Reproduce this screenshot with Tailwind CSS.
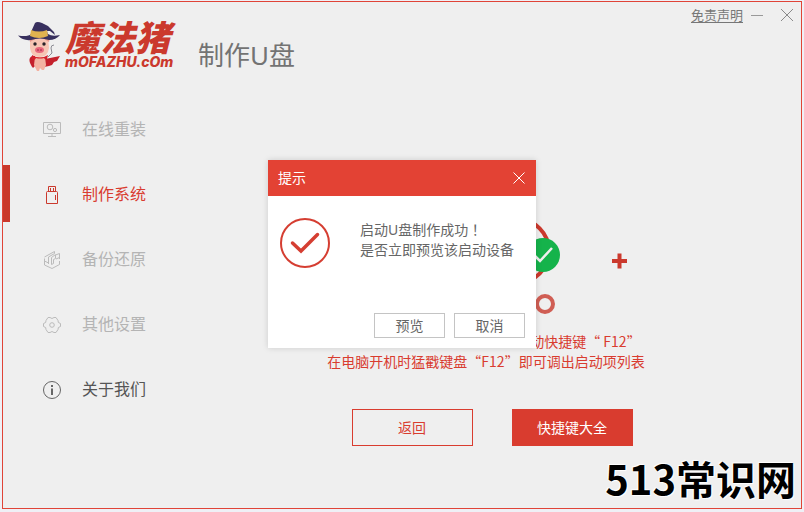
<!DOCTYPE html>
<html lang="zh-CN">
<head>
    <meta charset="UTF-8">
    <meta name="viewport" content="width=device-width, initial-scale=1.0">
    <title>魔法猪 - 制作U盘</title>
    <script src="https://cdn.jsdelivr.net/npm/@tailwindcss/browser@4"></script>
</head>
<body class="flex min-h-screen flex-col bg-[#eff0f6] px-0.5 pt-px pb-[3px] font-['Noto_Sans','Noto_Sans_CJK_SC',sans-serif] text-sm text-[#666]">
    <div class="relative flex flex-1 flex-col border border-[#e04437] bg-[#efefef]">
        <!-- Header -->
        <header class="flex items-start justify-between">
            <div class="flex items-start pt-5 pl-[15px]">
                <svg class="h-[50px] w-[42px]" viewBox="0 0 42 50" aria-hidden="true">
                    <path d="M36 23q-3 0-3 3l1 5-4 4" fill="none" stroke="#8b8b93" stroke-width="1"/>
                    <path d="M27 37l15-3-3 5-3 1-2 3-3 1-5 1z" fill="#c4202c"/>
                    <path d="M14 34c-4 2-3 7 1 12l3-3-1-9z" fill="#c4202c"/>
                    <path d="M17 35h10l1 8-2 5h-2l-2-2-1 3h-2l-3-6z" fill="#f3b2a2"/>
                    <path d="M14 33q8 5 16 0l-1 4q-2 1-3-1-4 1-8 0-1 3-4 1z" fill="#d5202b"/>
                    <path d="M12 15h18l1 11q-1 9-9.500 9T12 26z" fill="#f7c5b4"/>
                    <path d="M12 20l-1-5 6 2zM31 20l1-5-6 2z" fill="#e99b90"/>
                    <path d="M13 10L17 1q2-2 7 0l6 3 6 6 1 3-5-4-3 0 1 4H13z" fill="#38305e"/>
                    <path d="M0 13.500Q10 15 13 12q8 3 17 0 4 3 12 1-4 5-11 5-9-3-18 0-8 1-13-4.500z" fill="#38305e"/>
                    <path d="M13 8q8 3 16 0l1 6q-9 4-18 0z" fill="#e0b250"/>
                    <circle cx="17" cy="22" r="1.700" fill="#292329"/>
                    <circle cx="26" cy="22" r="1.700" fill="#292329"/>
                    <ellipse cx="21.500" cy="28" rx="4.500" ry="3" fill="#e8677c"/>
                    <path d="M20 27v2M23 27v2" stroke="#a02c45"/>
                </svg>
                <div class="w-[114px] pl-[5px] whitespace-nowrap text-[#cb392d] italic">
                    <div class="text-[35px] leading-8 font-black">魔法猪</div>
                    <div class="pt-0.5 font-['Inter'] text-sm leading-3 font-extrabold">mOFAZHU.cOm</div>
                </div>
                <h1 class="pt-[17px] pl-6 text-[26px] leading-8 text-[#737373]">制作U盘</h1>
            </div>
            <div class="flex items-center gap-2 pt-[3px] pr-2">
                <a href="#" class="text-[13px] leading-5 text-[#777] underline underline-offset-2">免责声明</a>
                <button type="button" aria-label="最小化">
                    <svg class="size-3" viewBox="0 0 12 12" stroke="#999"><path d="M0 6.500h12"/></svg>
                </button>
                <button type="button" aria-label="关闭" class="pl-2.5">
                    <svg class="size-3" viewBox="0 0 12 12" stroke="#8a8a8a"><path d="M0 0l12 12M12 0L0 12"/></svg>
                </button>
            </div>
        </header>

        <div class="flex flex-1 pt-7">
            <!-- Sidebar -->
            <nav class="flex w-[180px] flex-col gap-2 text-base text-[#b4b4b4]">
                <a href="#" class="flex h-[57px] items-center gap-5 border-l-7 border-transparent pl-8">
                    <svg class="size-5" viewBox="0 0 20 20" fill="none" stroke="#bbb">
                        <path d="M1.500 3.500h17v11h-17zM10 15v3M6 17.500h8"/>
                        <circle cx="8" cy="8" r="2.800"/>
                        <circle cx="13" cy="11" r="1.600"/>
                    </svg>
                    在线重装
                </a>
                <a href="#" aria-current="page" class="flex h-[57px] items-center gap-5 border-l-7 border-[#c9382c] pl-8 text-[#d93c2f]">
                    <svg class="size-5" viewBox="0 0 20 20" fill="none" stroke="#cb392d">
                        <path d="M6.500 7.500v-5h7v5M4.500 8.500q0-1 1-1h9q1 0 1 1v11h-11zM8.500 4v3M11.500 4v3M13.500 11v5"/>
                    </svg>
                    制作系统
                </a>
                <a href="#" class="flex h-[57px] items-center gap-5 border-l-7 border-transparent pl-8">
                    <svg class="size-5" viewBox="0 0 20 20" fill="none" stroke="#bbb">
                        <path d="M2.500 9.500V16l7.500 3.500 7.500-4V12M17.500 10V4.500L13.500 6v3.500l-2 1v4l-2 1V8.500l4-3M14 10l3.500-1.500M6.500 15V8l6-3.500V2.500L2.500 8M2.500 12l4 2"/>
                    </svg>
                    备份还原
                </a>
                <a href="#" class="flex h-[57px] items-center gap-5 border-l-7 border-transparent pl-8">
                    <svg class="size-5" viewBox="0 0 20 20" fill="none" stroke="#bbb" stroke-linejoin="round">
                        <path d="M6 3.500l2 0q2 2 4 0h2l2 3q-.5 2.500 2.500 3v3q-3 .5-2.500 3l-2 3h-2q-2-2-4 0H6l-2-3q.5-2.500-2.500-3v-3q3-.5 2.500-3z"/>
                        <circle cx="10" cy="11" r="2.300"/>
                    </svg>
                    其他设置
                </a>
                <a href="#" class="flex h-[57px] items-center gap-5 border-l-7 border-transparent pl-8 text-[#555]">
                    <svg class="size-5" viewBox="0 0 20 20" fill="none" stroke="#666">
                        <circle cx="10" cy="11" r="8.500"/>
                        <path d="M10 9.500V16M10 6v2" stroke-width="2"/>
                    </svg>
                    关于我们
                </a>
            </nav>

            <!-- Result -->
            <main class="flex flex-1 flex-col items-center pt-[116px]">
                <svg class="h-[100px] w-[270px]" viewBox="0 0 270 100" aria-hidden="true">
                    <circle cx="160" cy="35" r="32" fill="none" stroke="#cb392d" stroke-width="4"/>
                    <circle cx="186" cy="39" r="17" fill="#15b34b"/>
                    <path d="M177 39l6 6 12-13" fill="none" stroke="#efefef" stroke-width="2.500"/>
                    <path d="M255 45h15M262.500 37.500v15" stroke="#cb392d" stroke-width="4"/>
                    <circle cx="188" cy="88" r="8" fill="none" stroke="#d05e54" stroke-width="4"/>
                </svg>
                <div class="pt-[15px] pr-3 font-['Noto_Sans_CJK_SC',sans-serif] leading-5 text-[#d93c2f]">
                    <p class="pr-1 text-right">动快捷键“ F12”</p>
                    <p>在电脑开机时猛戳键盘“F12”即可调出启动项列表</p>
                </div>
                <div class="flex gap-[39px] pt-[38px]">
                    <button type="button" class="h-[37px] w-[121px] border border-[#d93c2f] text-[#d93c2f]">返回</button>
                    <button type="button" class="h-[37px] w-[121px] bg-[#d93c2f] text-white">快捷键大全</button>
                </div>
            </main>
        </div>

        <!-- Dialog -->
        <div class="absolute inset-0 flex items-center justify-center pb-0.5">
            <div role="dialog" aria-labelledby="dialog-title" class="w-[268px] bg-white shadow-[0_0_6px_rgba(0,0,0,0.15)]">
                <div class="flex h-9 items-center justify-between bg-[#e34234] pr-[11px] pl-2.5 text-white">
                    <h2 id="dialog-title">提示</h2>
                    <button type="button" aria-label="关闭">
                        <svg class="size-3" viewBox="0 0 12 12" stroke="#fff"><path d="M.5 .5l11 11M11.500 .5l-11 11"/></svg>
                    </button>
                </div>
                <div class="flex gap-[30px] pt-[22px] pl-3">
                    <svg class="size-[50px]" viewBox="0 0 50 50" fill="none" stroke="#d53e32">
                        <circle cx="25" cy="25" r="24" stroke-width="2"/>
                        <path d="M12.500 25l8.500 8 16.500-16.500" stroke-width="3.500" stroke-linecap="round"/>
                    </svg>
                    <p class="pt-px leading-5">启动U盘制作成功<span class="font-['Noto_Sans_CJK_TC']" lang="zh-TW">！</span><br>是否立即预览该启动设备</p>
                </div>
                <div class="flex justify-end gap-[9px] pt-[45px] pr-[11px] pb-2.5">
                    <button type="button" class="h-[25px] w-[71px] border border-[#c4c4c4]">预览</button>
                    <button type="button" class="h-[25px] w-[71px] border border-[#c4c4c4]">取消</button>
                </div>
            </div>
        </div>

        <!-- Site mark -->
        <div class="absolute right-[5px] bottom-1 font-['Noto_Sans_CJK_SC',sans-serif] text-[40px] leading-[52px] font-bold text-black [text-shadow:0_0_2px_#fff,0_0_2px_#fff,1px_1px_1px_#fff,-1px_-1px_1px_#fff]">513常识网</div>
    </div>
</body>
</html>
